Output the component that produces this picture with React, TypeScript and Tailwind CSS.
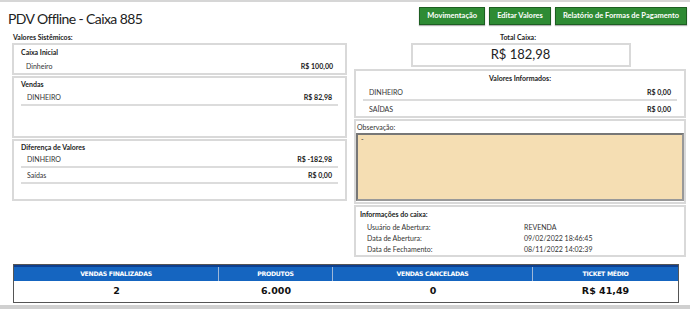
import React from "react";

const F = { fontFamily: "Lato, 'Open Sans', sans-serif" };
const V = { fontFamily: "'DejaVu Sans', Verdana, sans-serif" };

function Row({ label, value, line = true }: { label: string; value: string; line?: boolean }) {
  return (
    <div className={"mx-[7px] flex items-center justify-between px-[6px] h-[16px] text-[7px] text-[#333] " + (line ? "border-b-2 border-[#dcdcdc]" : "")}>
      <span>{label}</span>
      <span className="font-bold text-[#222]">{value}</span>
    </div>
  );
}

function Box({ children, className = "" }: { children: React.ReactNode; className?: string }) {
  return <div className={"border-2 border-[#d9d9d9] bg-white " + className}>{children}</div>;
}

export default function App() {
  return (
    <div className="w-[690px] h-[309px] bg-white relative overflow-hidden" style={F}>
      <div className="h-[2px] bg-[#d6d6d6]" />
      <div className="flex items-start justify-between pl-[8px] pr-[3px] pt-[5px]">
        <div className="text-[14px] tracking-[-0.6px] text-[#222] mt-[5px] leading-none">PDV Offline - Caixa 885</div>
        <div className="flex gap-[4px]">
          {["Movimentação", "Editar Valores", "Relatório de Formas de Pagamento"].map((t) => (
            <div key={t} className="h-[18px] px-[7px] flex items-center bg-[#2e8b34] border border-[#1d5e22] text-white text-[7.5px] font-bold shadow-[0_1px_1px_rgba(0,0,0,0.3)]">
              {t}
            </div>
          ))}
        </div>
      </div>

      <div className="flex pl-[12px] pr-[4px] mt-[6px] gap-[7px]">
        {/* left */}
        <div className="w-[335px] flex flex-col">
          <div className="text-[7px] font-bold text-[#222] pl-[1px] h-[11px] leading-[10px]">Valores Sistêmicos:</div>
          <Box className="h-[32px]">
            <div className="text-[7px] font-bold text-[#222] px-[7px] pt-[2px] h-[13px]">Caixa Inicial</div>
            <div className="flex items-center justify-between px-[12px] h-[16px] text-[7px] text-[#333]">
              <span>Dinheiro</span>
              <span className="font-bold text-[#222]">R$ 100,00</span>
            </div>
          </Box>
          <Box className="h-[62px] mt-[1px]">
            <div className="text-[7px] font-bold text-[#222] px-[7px] pt-[1px] h-[12px]">Vendas</div>
            <Row label="DINHEIRO" value="R$ 82,98" />
          </Box>
          <Box className="h-[62px] mt-[1px]">
            <div className="text-[7px] font-bold text-[#222] px-[7px] pt-[1px] h-[11px]">Diferença de Valores</div>
            <Row label="DINHEIRO" value="R$ -182,98" />
            <Row label="Saídas" value="R$ 0,00" />
          </Box>
        </div>

        {/* right */}
        <div className="w-[332px] flex flex-col">
          <div className="text-[7px] font-bold text-[#222] text-center h-[10px] leading-[10px] ml-[-4px]">Total Caixa:</div>
          <div className="flex justify-center pl-[1px] mt-[1px]">
            <div className="w-[220px] h-[24px] border-2 border-[#d9d9d9] flex items-center justify-center text-[13px] text-[#222]">
              R$ 182,98
            </div>
          </div>
          <Box className="h-[49px] mt-[2px]">
            <div className="text-[7px] font-bold text-[#222] text-center pt-[2px] h-[14px]">Valores Informados:</div>
            <Row label="DINHEIRO" value="R$ 0,00" />
            <Row label="SAÍDAS" value="R$ 0,00" line={false} />
          </Box>
          <Box className="h-[85px] mt-[1px]">
            <div className="text-[7px] text-[#333] px-[1px] h-[12px] leading-[12px]">Observação:</div>
            <div className="h-[68px] bg-[#f5deb3] border-2 border-t-[#777] border-l-[#777] border-r-[#999] border-b-[#999] text-[7px] text-[#333] px-[3px] leading-[9px]">
              -
            </div>
          </Box>
          <Box className="h-[52px] mt-[1px]">
            <div className="text-[7px] font-bold text-[#222] px-[4px] pt-[2px] h-[15px]">Informações do caixa:</div>
            <div className="grid grid-cols-[157px_1fr] pl-[11px] text-[7px] text-[#333] leading-[11px]">
              <span>Usuário de Abertura:</span>
              <span>REVENDA</span>
              <span>Data de Abertura:</span>
              <span>09/02/2022 18:46:45</span>
              <span>Data de Fechamento:</span>
              <span>08/11/2022 14:02:39</span>
            </div>
          </Box>
        </div>
      </div>

      <div className="absolute left-[13px] top-[264px] w-[666px] border border-[#555]" style={V}>
        <div className="grid grid-cols-[205px_114px_200px_1fr] bg-[#1565c0] border-t-2 border-[#0d3f8f] text-white text-[6.2px] font-bold h-[16px]">
          {["VENDAS FINALIZADAS", "PRODUTOS", "VENDAS CANCELADAS", "TICKET MÉDIO"].map((t, i) => (
            <div key={t} className={"flex items-center justify-center tracking-[-0.3px] " + (i < 3 ? "border-r border-[#9fb8d8]" : "")}>
              {t}
            </div>
          ))}
        </div>
        <div className="grid grid-cols-[205px_114px_200px_1fr] bg-white text-[#111] text-[9.5px] font-bold h-[21px]">
          {["2", "6.000", "0", "R$ 41,49"].map((t) => (
            <div key={t} className="flex items-center justify-center">{t}</div>
          ))}
        </div>
      </div>

      <div className="absolute left-0 bottom-0 w-full h-[4px] bg-[#d0d0d0]" />
    </div>
  );
}
